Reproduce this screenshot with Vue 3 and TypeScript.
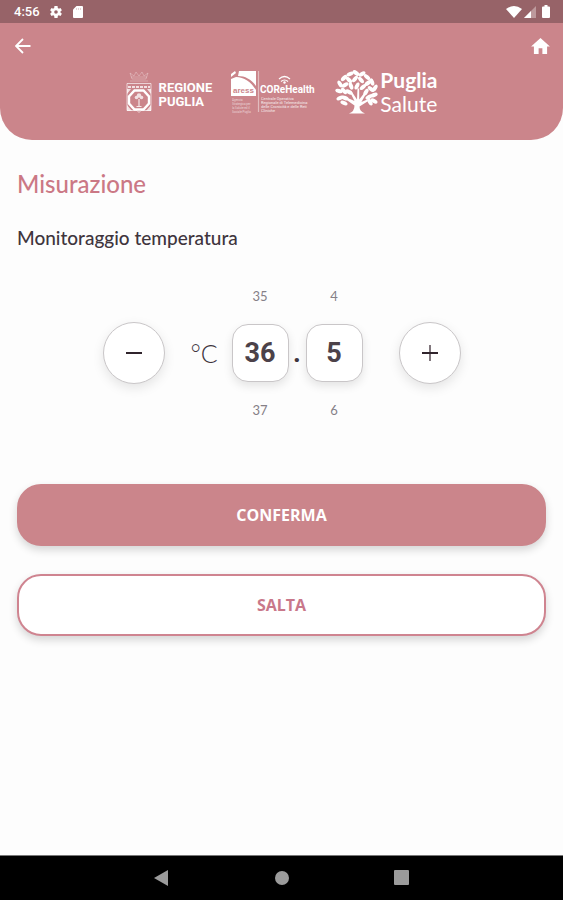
<script setup lang="ts">
import { computed, ref } from 'vue'

interface Leaf {
  x: number
  y: number
  r: number
}

const tenths = ref(365)
const whole = computed(() => Math.floor(tenths.value / 10))
const decimal = computed(() => tenths.value % 10)

function step(delta: number): void {
  tenths.value = Math.min(429, Math.max(341, tenths.value + delta))
}

const leaves: Leaf[] = [
  { x: 15, y: 4, r: -25 }, { x: 21, y: 3, r: 35 }, { x: 27, y: 4, r: -30 }, { x: 32, y: 7, r: 40 },
  { x: 9, y: 8, r: -45 }, { x: 14, y: 10, r: 45 }, { x: 20, y: 9, r: -50 }, { x: 26, y: 10, r: 50 },
  { x: 33, y: 13, r: -35 }, { x: 37, y: 12, r: 70 }, { x: 5, y: 14, r: 60 }, { x: 10, y: 15, r: -30 },
  { x: 16, y: 16, r: 70 }, { x: 22, y: 16, r: -65 }, { x: 28, y: 17, r: -40 }, { x: 36, y: 19, r: 40 },
  { x: 40, y: 18, r: -60 }, { x: 4, y: 21, r: 15 }, { x: 9, y: 21, r: 50 }, { x: 14, y: 22, r: 30 },
  { x: 31, y: 22, r: -60 }, { x: 39, y: 25, r: -20 }, { x: 5, y: 28, r: -25 }, { x: 10, y: 28, r: 20 },
  { x: 34, y: 27, r: -30 }, { x: 39, y: 31, r: 30 }, { x: 35, y: 32, r: 60 }, { x: 9, y: 33, r: 25 },
]
</script>

<template>
  <div class="screen">
    <div class="status">
      <div class="status-group">
        <span class="clock">4:56</span>
        <svg class="status-icon gear" viewBox="2 2 20 20" aria-hidden="true">
          <path fill="#fff" fill-rule="evenodd" d="M19.400 13a7.500 7.500 0 0 0 0-2l2.400-1.800-2.300-4-2.800 1.200a8 8 0 0 0-1.700-1L14.600 2H9.400L9 5.400a8 8 0 0 0-1.700 1L4.500 5.200l-2.300 4L4.600 11a7.500 7.500 0 0 0 0 2l-2.400 1.800 2.300 4 2.800-1.200a8 8 0 0 0 1.700 1l.4 3.400h5.200l.4-3.400a8 8 0 0 0 1.700-1l2.800 1.200 2.300-4zM12 15a3 3 0 1 1 0-6 3 3 0 0 1 0 6z" />
        </svg>
        <svg class="status-icon" viewBox="0 0 12 14" aria-hidden="true">
          <path fill="#fff" d="M4.500 1H10q1 0 1 1v10q0 1-1 1H2q-1 0-1-1V4.500z" />
          <path d="M4.500 3v2M6.500 3v2M8.500 3v2" stroke="#dcc0c3" stroke-width=".7" />
        </svg>
      </div>
      <div class="status-group signals">
        <svg class="wifi" viewBox="0 0 16 12" aria-hidden="true">
          <path fill="#fff" d="M0 3Q8-3 16 3L8 12z" />
        </svg>
        <svg class="cell" viewBox="0 0 12 12" aria-hidden="true">
          <path fill="#bd999c" d="M12 0v12H0z" />
          <path fill="#fff" d="M7 5v7H0z" />
        </svg>
        <svg class="battery" viewBox="0 0 8 13" aria-hidden="true">
          <path fill="#fff" d="M2.500 0h3v1.500H7q1 0 1 1V12q0 1-1 1H1q-1 0-1-1V2.500q0-1 1-1h1.500z" />
        </svg>
      </div>
    </div>

    <header class="header">
      <div class="toolbar">
        <button class="icon-button" type="button" aria-label="Indietro">
          <svg class="back-icon" viewBox="0 0 16 16" aria-hidden="true">
            <path d="M15.500 8H1.500M8 1L1 8l7 7" fill="none" stroke="#fff" stroke-width="1.800" />
          </svg>
        </button>
        <button class="icon-button" type="button" aria-label="Home">
          <svg class="home-icon" viewBox="0 0 20 17" aria-hidden="true">
            <path fill="#fff" d="M10 0l10 9h-3v8h-5v-6H8v6H3V9H0z" />
          </svg>
        </button>
      </div>

      <div class="logos">
        <div class="logo regione">
          <svg class="crest" viewBox="0 0 26 42" aria-hidden="true">
            <g fill="none" stroke="#fff">
              <path d="M4 2l2 6h14l2-6-4 3-2-4-3 4-3-4-2 4zM5 6h16M4 10h18" stroke-width=".7" opacity=".4" />
              <path d="M1 12.500h24v27H15l-2 2-2-2H1z" stroke-width=".8" opacity=".8" />
              <path d="M2 16h22" stroke-width="2" stroke-dasharray="3 1" opacity=".75" />
              <path d="M8.500 19.500h9l5.500 6v7l-5.500 6h-9L3 32.500v-7z" stroke-width="2.400" />
              <path d="M13 28v7M10.500 35.500h5" stroke-width="1.200" opacity=".8" />
            </g>
            <g fill="#fff" opacity=".75">
              <circle cx="13" cy="24.500" r="2.200" />
              <circle cx="10.500" cy="26.500" r="1.800" />
              <circle cx="15.500" cy="26.500" r="1.800" />
              <path d="M1 18h4l-4 5zM25 18h-4l4 5zM1 40v-6l5 6zM25 40v-6l-5 6z" />
            </g>
          </svg>
          <span class="regione-name">REGIONE<br>PUGLIA</span>
        </div>

        <div class="logo core">
          <svg class="core-mark" viewBox="0 0 87 44" role="img" aria-label="COReHealth">
            <path fill="#fff" d="M1 4L5 1 6 3 1 7zM9 1h17v15C21 9 15 6 8 6zM1 9l5-2c8 0 15 5 20 13v6H1z" />
            <text class="aress" x="3" y="23">aress</text>
            <g class="fine faint">
              <text x="2" y="31">Agenzia</text>
              <text x="2" y="35">Strategica per</text>
              <text x="2" y="39">la Salute ed il</text>
              <text x="2" y="43">Sociale Puglia</text>
            </g>
            <path d="M28.500 1v41" stroke="#fff" stroke-width="1.200" opacity=".45" />
            <g fill="none" stroke="#fff" stroke-width="1.200">
              <path d="M49 9q5.500-5 11 0M51 11.500q3.500-3 7 0" />
            </g>
            <circle cx="54.500" cy="12.500" r="1.200" fill="#fff" />
            <text class="core-name" x="30" y="23">COReHealth</text>
            <g class="fine">
              <text x="31" y="30">Centrale Operativa</text>
              <text x="31" y="34">Regionale di Telemedicina</text>
              <text x="31" y="38">delle Cronicità e delle Reti</text>
              <text x="31" y="42">Cliniche</text>
            </g>
          </svg>
        </div>

        <div class="logo salute">
          <svg class="tree" viewBox="0 0 44 44" aria-hidden="true">
            <g fill="#fff">
              <ellipse v-for="(leaf, i) in leaves" :key="i" :cx="leaf.x" :cy="leaf.y" rx="3.800" ry="2" :transform="`rotate(${leaf.r} ${leaf.x} ${leaf.y})`" />
              <path d="M14 43.500q5.500-2 5.500-8l-10-7 1-1.500 9 4-5-10 1.500-.5 6 9 .5-11h1.700v11l7-9 1.200 1-6 10.500 7-3 .6 1.500-9.500 6q0 5 5.500 7z" />
            </g>
          </svg>
          <span class="salute-name"><b>Puglia</b><br>Salute</span>
        </div>
      </div>
    </header>

    <main class="content">
      <h1>Misurazione</h1>
      <h2>Monitoraggio temperatura</h2>

      <div class="picker" role="group" aria-label="Temperatura">
        <button class="round" type="button" aria-label="Diminuisci" @click="step(-1)">
          <svg class="sign" viewBox="0 0 16 16" aria-hidden="true">
            <path d="M0 8h16" stroke="#30242c" stroke-width="2" />
          </svg>
        </button>
        <span class="unit">°C</span>
        <div class="wheel">
          <span class="near">{{ whole - 1 }}</span>
          <output class="value">{{ whole }}</output>
          <span class="near">{{ whole + 1 }}</span>
        </div>
        <span class="point">.</span>
        <div class="wheel last">
          <span class="near">{{ (decimal + 9) % 10 }}</span>
          <output class="value">{{ decimal }}</output>
          <span class="near">{{ (decimal + 1) % 10 }}</span>
        </div>
        <button class="round" type="button" aria-label="Aumenta" @click="step(1)">
          <svg class="sign" viewBox="0 0 16 16" aria-hidden="true">
            <path d="M8 0v16" stroke="#81777d" stroke-width="2" />
            <path d="M0 8h16" stroke="#30242c" stroke-width="2" />
          </svg>
        </button>
      </div>

      <div class="actions">
        <button class="action primary" type="button">CONFERMA</button>
        <button class="action" type="button">SALTA</button>
      </div>
    </main>

    <nav class="system" aria-label="Sistema">
      <button type="button" aria-label="Indietro di sistema">
        <svg viewBox="0 0 16 16" aria-hidden="true"><path fill="#9b9b9b" d="M14 0v16L0 8z" /></svg>
      </button>
      <button type="button" aria-label="Schermata iniziale">
        <svg viewBox="0 0 16 16" aria-hidden="true"><circle cx="8" cy="8" r="7" fill="#9b9b9b" /></svg>
      </button>
      <button type="button" aria-label="App recenti">
        <svg viewBox="0 0 16 16" aria-hidden="true"><rect x="0" y="0" width="15" height="15" rx="1" fill="#9b9b9b" /></svg>
      </button>
    </nav>
  </div>
</template>

<style>
body {
  margin: 0;
  background: #fdfdfd;
}
</style>

<style scoped>
.screen {
  display: flex;
  flex-direction: column;
  min-height: 100vh;
  background: #fdfdfd;
  color: #40353d;
  font-family: Lato, "Noto Sans", sans-serif;
}

button {
  padding: 0;
  border: 0;
  background: none;
  font: inherit;
  cursor: pointer;
}

svg {
  display: block;
}

.status {
  display: flex;
  align-items: center;
  justify-content: space-between;
  height: 23px;
  padding: 0 13px 0 14px;
  background: #976368;
  color: #fff;
}

.status-group {
  display: flex;
  align-items: center;
  gap: 10px;
}

.signals {
  gap: 2px;
}

.clock {
  font: 500 13px/23px Roboto, sans-serif;
}

.status-icon {
  width: 12px;
  height: 14px;
}

.wifi {
  width: 16px;
  height: 12px;
}

.cell {
  width: 12px;
  height: 12px;
  margin-right: 4px;
}

.battery {
  width: 8px;
  height: 13px;
}

.header {
  height: 117px;
  border-radius: 0 0 32px 32px;
  background: #cb858b;
  color: #fff;
}

.toolbar {
  display: flex;
  align-items: center;
  justify-content: space-between;
  height: 45px;
  padding: 0 13px 0 15px;
}

.back-icon {
  width: 16px;
  height: 16px;
}

.home-icon {
  width: 19px;
  height: 16px;
}

.logos {
  display: flex;
  align-items: center;
  justify-content: center;
  gap: 18px;
}

.logo {
  display: flex;
  align-items: center;
}

.regione {
  gap: 7px;
}

.crest {
  width: 26px;
  height: 42px;
}

.regione-name {
  padding-top: 6px;
  font: 700 13px/14px Roboto, sans-serif;
}

.core-mark {
  width: 87px;
  height: 44px;
}

.aress {
  fill: #cb858b;
  font: 700 8px "Liberation Sans", sans-serif;
}

.core-name {
  fill: #fff;
  font: 700 10px Roboto, sans-serif;
}

.fine {
  fill: #fff;
  font: 4px Roboto, sans-serif;
  opacity: 0.85;
}

.faint {
  font-size: 3px;
  opacity: 0.6;
}

.salute {
  gap: 1px;
}

.tree {
  width: 44px;
  height: 44px;
}

.salute-name {
  font: 400 21px/24px Lato, sans-serif;
}

.content {
  flex: 1;
  padding: 28px 17px 32px;
}

h1 {
  margin: 0;
  color: #cb7885;
  font-size: 24px;
  font-weight: 500;
  line-height: 32px;
}

h2 {
  margin: 24px 0 0;
  font-size: 19px;
  font-weight: 500;
  line-height: 28px;
}

.picker {
  display: flex;
  align-items: center;
  justify-content: center;
  margin-top: 36px;
}

.round {
  display: grid;
  place-items: center;
  width: 62px;
  height: 62px;
  border: 1px solid #c9c6c8;
  border-radius: 50%;
  background: #fff;
  box-shadow: 0 4px 12px rgb(0 0 0 / 10%);
}

.sign {
  width: 16px;
  height: 16px;
}

.unit {
  width: 26px;
  margin: 0 15px 0 26px;
  font-size: 25px;
  font-weight: 300;
  line-height: 32px;
  white-space: nowrap;
}

.wheel {
  display: flex;
  flex-direction: column;
  align-items: center;
  gap: 20px;
}

.last {
  margin-right: 36px;
}

.near {
  color: #858087;
  font-size: 13px;
  line-height: 16px;
}

.value {
  box-sizing: border-box;
  width: 57px;
  height: 58px;
  border: 1px solid #c9c6c8;
  border-radius: 16px;
  background: #fff;
  box-shadow: 0 4px 10px rgb(0 0 0 / 10%);
  color: #4c4249;
  font: 700 27px/56px Roboto, sans-serif;
  text-align: center;
}

.point {
  width: 17px;
  font: 700 27px/32px Roboto, sans-serif;
  text-align: center;
}

.actions {
  display: grid;
  gap: 28px;
  margin-top: 66px;
}

.action {
  height: 62px;
  border: 2px solid #cf8490;
  border-radius: 24px;
  background: #fff;
  box-shadow: 0 4px 8px rgb(0 0 0 / 16%);
  color: #c9788a;
  font: 700 16px/24px "Open Sans", sans-serif;
}

.primary {
  border-color: #cb858b;
  background: #cb858b;
  color: #fff;
}

.system {
  display: flex;
  align-items: center;
  justify-content: center;
  gap: 104px;
  height: 44px;
  border-top: 1px solid #777;
  background: #000;
}

.system svg {
  width: 16px;
  height: 16px;
}
</style>
